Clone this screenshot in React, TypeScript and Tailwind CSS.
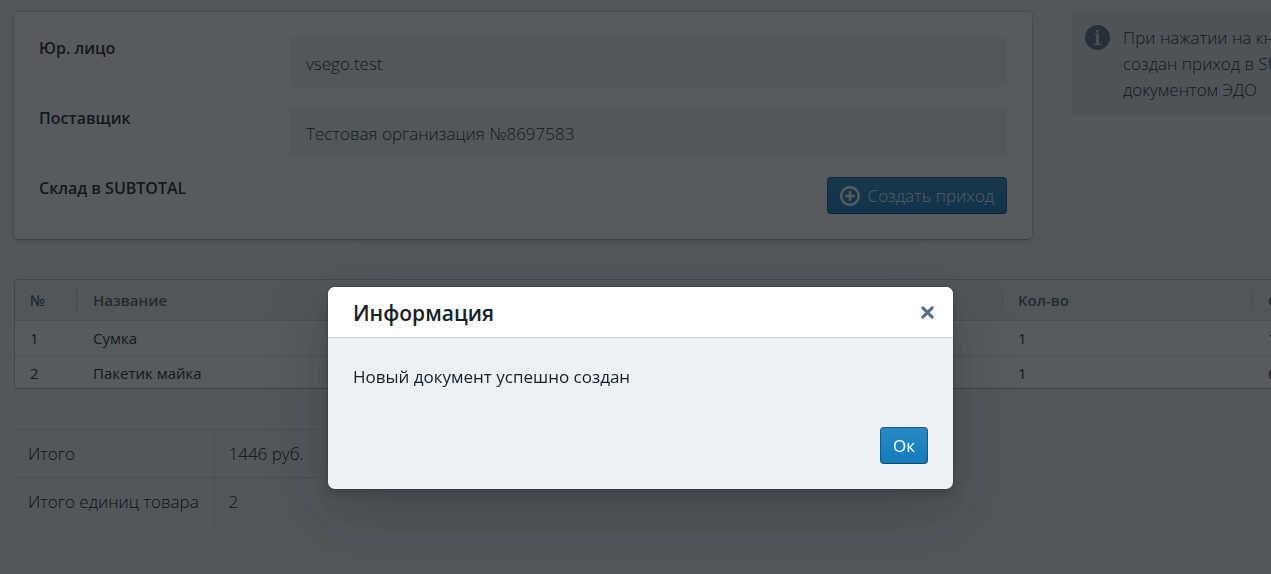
import { useState } from "react";

interface Item {
  id: number;
  name: string;
  qty: number;
  sum: number;
}

const items: Item[] = [
  { id: 1, name: "Сумка", qty: 1, sum: 1386 },
  { id: 2, name: "Пакетик майка", qty: 1, sum: 60 },
];

const fields = [
  { id: "legal", label: "Юр. лицо", value: "vsego.test" },
  { id: "supplier", label: "Поставщик", value: "Тестовая организация №8697583" },
];

const primaryButton =
  "flex h-[37px] items-center rounded-[4px] bg-[#137cbd] bg-linear-to-b from-white/10 to-white/0 px-[13px] text-[17px] text-white shadow-[inset_0_0_0_1px_rgba(16,22,26,0.4),inset_0_-1px_0_rgba(16,22,26,0.2)] hover:bg-[#106ba3]";

function AddIcon() {
  return (
    <svg viewBox="0 0 16 16" className="size-5" fill="currentColor" aria-hidden="true">
      <path d="M10.99 6.99h-2v-2c0-.55-.45-1-1-1s-1 .45-1 1v2h-2c-.55 0-1 .45-1 1s.45 1 1 1h2v2c0 .55.45 1 1 1s1-.45 1-1v-2h2c.55 0 1-.45 1-1s-.45-1-1-1zm-3-7c-4.42 0-8 3.58-8 8s3.58 8 8 8 8-3.58 8-8-3.58-8-8-8zm0 14c-3.31 0-6-2.69-6-6s2.69-6 6-6 6 2.69 6 6-2.69 6-6 6z" />
    </svg>
  );
}

function InfoIcon() {
  return (
    <svg viewBox="0 0 20 20" className="size-[25px] shrink-0" fill="currentColor" aria-hidden="true">
      <path
        fillRule="evenodd"
        d="M10 0C4.48 0 0 4.48 0 10s4.48 10 10 10 10-4.48 10-10S15.52 0 10 0zM9 4h2v2H9V4zm4 12H7v-1h2V8H8V7h3v8h2v1z"
      />
    </svg>
  );
}

function CrossIcon() {
  return (
    <svg viewBox="0 0 16 16" className="size-[25px]" fill="currentColor" aria-hidden="true">
      <path d="M9.41 8l2.29-2.29c.19-.18.3-.43.3-.71a1.003 1.003 0 00-1.71-.71L8 6.59l-2.29-2.3a1.003 1.003 0 00-1.42 1.42L6.59 8 4.3 10.29c-.19.18-.3.43-.3.71a1.003 1.003 0 001.71.71L8 9.41l2.29 2.29c.18.19.43.3.71.3a1.003 1.003 0 00.71-1.71L9.41 8z" />
    </svg>
  );
}

function ItemsTable() {
  return (
    <div className="mt-10 h-[110px] overflow-hidden rounded-[3px] border border-[#b5bec6] border-b-[#a4adb5] bg-white">
      <table className="w-full table-fixed border-collapse text-left text-[15px]">
        <colgroup>
          <col className="w-[63px]" />
          <col />
          <col className="w-[250px]" />
          <col className="w-[148px]" />
        </colgroup>
        <thead>
          <tr className="h-10 border-b border-[#d0d5d9] bg-[#eceff1] text-[#4f5a62]">
            {["№", "Название", "Кол-во", "Сумма"].map((title, i) => (
              <th key={title} className="p-0 font-semibold">
                <div className={i < 3 ? "h-5 border-r-2 border-[#d6dadd] pl-[15px] leading-5" : "pl-[15px] leading-5"}>
                  {title}
                </div>
              </th>
            ))}
          </tr>
        </thead>
        <tbody>
          {items.map((item) => (
            <tr key={item.id} className="h-[35px] border-b border-[#dde1e4]">
              <td className="p-0 pt-px pl-[15px]">{item.id}</td>
              <td className="p-0 pt-px pl-[15px]">{item.name}</td>
              <td className="p-0 pt-px pl-[15px]">{item.qty}</td>
              <td className="p-0 pt-px pl-[15px]">{item.sum}</td>
            </tr>
          ))}
        </tbody>
      </table>
    </div>
  );
}

function InfoDialog({ onClose }: { onClose: () => void }) {
  return (
    <div className="fixed inset-0 flex items-start justify-center bg-[rgba(16,22,26,0.7)] pt-[287px] pl-[10px]">
      <div
        role="dialog"
        aria-modal="true"
        aria-labelledby="dialog-title"
        className="w-[625px] overflow-hidden rounded-[7px] bg-[#ebf1f5] shadow-[0_0_0_1px_rgba(16,22,26,0.1),0_5px_10px_rgba(16,22,26,0.2),0_22px_58px_8px_rgba(16,22,26,0.2)]"
      >
        <div className="flex h-[51px] items-center justify-between border-b border-[#c7cfd4] bg-white pr-[13px] pl-[25px]">
          <h4 id="dialog-title" className="pt-1 text-[21px] font-semibold">
            Информация
          </h4>
          <button type="button" aria-label="Закрыть" onClick={onClose} className="text-[#5c7080]">
            <CrossIcon />
          </button>
        </div>
        <p className="mx-[25px] mt-[27px] text-[17px] leading-6">Новый документ успешно создан</p>
        <div className="mx-[25px] mt-[38px] mb-[25px] flex justify-end">
          <button type="button" onClick={onClose} className={primaryButton}>
            Ок
          </button>
        </div>
      </div>
    </div>
  );
}

export default function App() {
  const [dialogOpen, setDialogOpen] = useState(true);

  return (
    <div className="min-h-screen overflow-hidden bg-[#f0f2f6] font-['Open_Sans',sans-serif] text-[#182026]">
      <main className="min-w-[1416px] px-[14px] pt-3">
        <div className="flex items-start gap-10">
          <section className="flex flex-1 flex-col gap-5 rounded-[4px] bg-white p-[25px] shadow-[0_0_0_1px_rgba(16,22,26,0.1),0_1px_1px_rgba(16,22,26,0.2),0_2px_7px_rgba(16,22,26,0.2)]">
            {fields.map((field) => (
              <div key={field.id} className="flex h-[50px]">
                <label htmlFor={field.id} className="w-[252px] text-[16px] leading-[22px] font-semibold">
                  {field.label}
                </label>
                <input
                  id={field.id}
                  readOnly
                  value={field.value}
                  className="flex-1 rounded-[4px] bg-[#edf0f2] px-[15px] pt-1 text-[17px] font-light text-[#182026] outline-none"
                />
              </div>
            ))}
            <div className="flex justify-between">
              <span className="text-[16px] leading-[22px] font-semibold">Склад в SUBTOTAL</span>
              <button
                type="button"
                onClick={() => setDialogOpen(true)}
                className={`${primaryButton} gap-2 font-light`}
              >
                <AddIcon />
                Создать приход
              </button>
            </div>
          </section>

          <aside className="flex w-[330px] gap-[13px] rounded-[4px] bg-[#e1e5ea] px-[13px] pt-[13px] pb-[11px] text-[#5c7080]">
            <InfoIcon />
            <p className="text-[17px] leading-[26px] font-light text-[#182026]">
              При нажатии на кнопку будет создан приход в SUBTOTAL с документом ЭДО
            </p>
          </aside>
        </div>

        <ItemsTable />

        <table className="mt-10 border-collapse text-left text-[17px] font-light text-black">
          <tbody>
            <tr className="h-12 border-t border-[#cdd3d8]">
              <th className="w-[200px] border-r border-[#cdd3d8] p-0 pl-[14px] font-light">Итого</th>
              <td className="p-0 px-[14px]">1446 руб.</td>
            </tr>
            <tr className="h-12 border-t border-[#cdd3d8]">
              <th className="border-r border-[#cdd3d8] p-0 px-[14px] font-light whitespace-nowrap">
                Итого единиц товара
              </th>
              <td className="p-0 px-[14px]">2</td>
            </tr>
          </tbody>
        </table>
      </main>

      {dialogOpen && <InfoDialog onClose={() => setDialogOpen(false)} />}
    </div>
  );
}
